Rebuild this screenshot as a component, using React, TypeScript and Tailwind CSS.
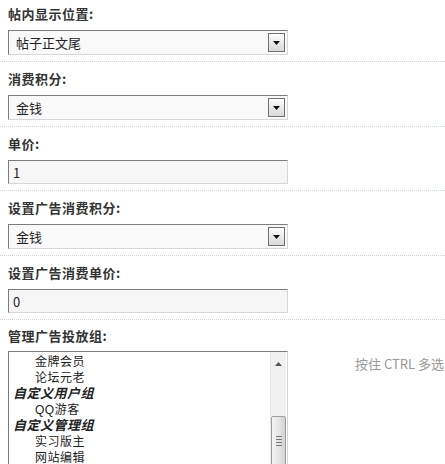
import React from 'react'

const font = { fontFamily: '"Noto Sans CJK SC", "Liberation Sans", sans-serif' }
const listFont = { fontFamily: '"Liberation Sans", "Noto Sans CJK SC", sans-serif' }

function Label({ text, first, last }: { text: string; first?: boolean; last?: boolean }) {
  const size = first ? 'pt-[5px] h-[30px]' : last ? 'pt-[7px] h-[31px]' : 'pt-[8px] h-[33px]'
  return (
    <div className={`pl-2 text-[13px] tracking-[0.5px] leading-[18px] font-bold text-[#333] ${size}`}>
      {text}
    </div>
  )
}

function Select({ value }: { value: string }) {
  return (
    <div className="ml-2 w-[280px] h-[25px] flex items-center border border-t-[#7c7c7c] border-l-[#7c7c7c] border-b-[#d6d6d6] border-r-[#d6d6d6] bg-[#f9f9f9]">
      <span className="flex-1 pl-[7px] text-[13px] text-[#222] leading-none">{value}</span>
      <div className="mr-[2px] w-[17px] h-[19px] border border-[#707070] bg-gradient-to-b from-[#fdfdfd] to-[#d9d9d9] flex items-center justify-center">
        <svg width="7" height="4" viewBox="0 0 7 4">
          <path d="M0 0h7L3.5 4z" fill="#111" />
        </svg>
      </div>
    </div>
  )
}

function Input({ value }: { value: string }) {
  return (
    <div className="ml-2 w-[280px] h-[24px] flex items-center border border-t-[#7c7c7c] border-l-[#7c7c7c] border-b-[#d6d6d6] border-r-[#d6d6d6] bg-[#f6f6f6]">
      <span className="pl-[4px] text-[13px] text-[#222] leading-none">{value}</span>
    </div>
  )
}

function Section({ label, first, children }: { label: string; first?: boolean; children: React.ReactNode }) {
  return (
    <div className="border-b border-dotted border-[#c8d5e1] pb-[6px]">
      <Label text={label} first={first} />
      {children}
    </div>
  )
}

const items: { text: string; group?: boolean }[] = [
  { text: '金牌会员' },
  { text: '论坛元老' },
  { text: '自定义用户组', group: true },
  { text: 'QQ游客' },
  { text: '自定义管理组', group: true },
  { text: '实习版主' },
  { text: '网站编辑' },
]

export default function App() {
  return (
    <div className="w-[445px] h-[464px] overflow-hidden bg-white whitespace-nowrap" style={font}>
      <Section label="帖内显示位置:" first>
        <Select value="帖子正文尾" />
      </Section>
      <Section label="消费积分:">
        <Select value="金钱" />
      </Section>
      <Section label="单价:">
        <Input value="1" />
      </Section>
      <Section label="设置广告消费积分:">
        <Select value="金钱" />
      </Section>
      <Section label="设置广告消费单价:">
        <Input value="0" />
      </Section>
      <Label text="管理广告投放组:" last />
      <div className="flex items-start">
        <div className="ml-2 w-[280px] h-[120px] flex border border-t-[#7c7c7c] border-l-[#7c7c7c] border-r-[#d6d6d6] bg-white overflow-hidden">
          <div className="flex-1 flex flex-col pt-[2px]" style={listFont}>
            {items.map((it) =>
              it.group ? (
                <div key={it.text} className="pl-[4px] h-[16px] text-[13px] tracking-[0.5px] leading-[16px] font-bold italic text-[#222]">
                  {it.text}
                </div>
              ) : (
                <div key={it.text} className="pl-[26px] h-[16px] text-[12px] tracking-[0.5px] leading-[16px] text-[#222]">
                  {it.text}
                </div>
              ),
            )}
          </div>
          <div className="w-[16px] mr-px bg-[#f1f1f1] border-l border-[#e6e6e6] flex flex-col items-center">
            <div className="h-[19px] flex items-center justify-center pt-[4px]">
              <svg width="7" height="4" viewBox="0 0 7 4">
                <path d="M3.5 0L7 4H0z" fill="#555" />
              </svg>
            </div>
            <div className="mt-[45px] w-[15px] flex-1 rounded-t-[2px] border border-[#9e9e9e] bg-gradient-to-r from-[#f4f4f4] via-[#e6e6e6] to-[#d2d2d2] flex flex-col items-center pt-[19px] gap-[2px]">
              <div className="w-[6px] h-px bg-[#777]" />
              <div className="w-[6px] h-px bg-[#777]" />
              <div className="w-[6px] h-px bg-[#777]" />
              <div className="w-[6px] h-px bg-[#777]" />
            </div>
          </div>
        </div>
        <div className="ml-[67px] mt-[5px] text-[13px] leading-[16px] text-[#999]">按住 CTRL 多选</div>
      </div>
    </div>
  )
}
